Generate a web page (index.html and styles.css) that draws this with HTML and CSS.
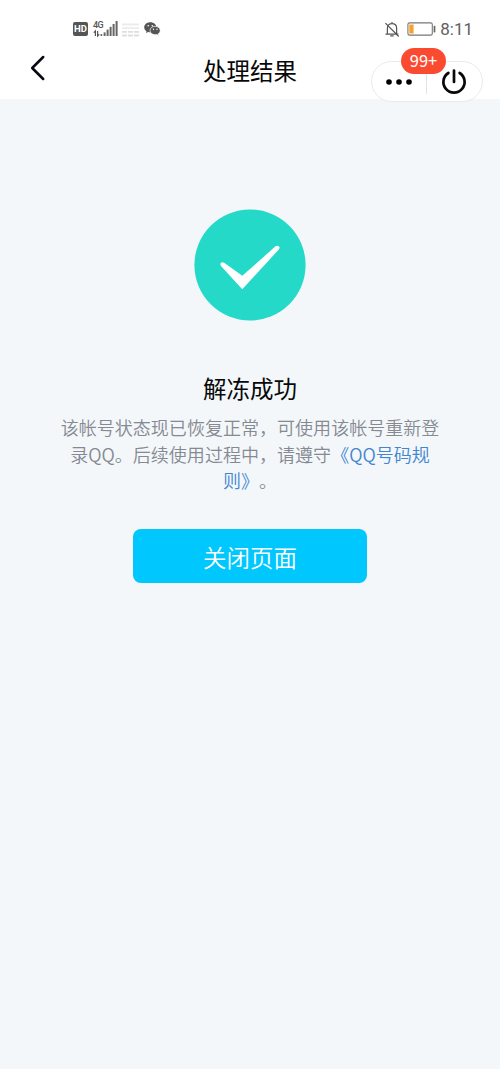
FILE: index.html
```html
<!DOCTYPE html>
<html lang="zh-CN">
<head>
<meta charset="utf-8">
<title>处理结果</title>
<link rel="stylesheet" href="styles.css">
</head>
<body>
<header class="top">
  <div class="status">
    <div class="status-left">
      <span class="hd">HD</span>
      <div class="network">
        <span class="gen">4G</span>
        <svg class="signal" width="26" height="18" viewBox="0 0 26 18">
          <g fill="#666">
            <rect x="10.6" y="12.4" width="2" height="3.6"/><rect x="13.6" y="9.6" width="2" height="6.4"/>
            <rect x="16.6" y="6.8" width="2" height="9.2"/><rect x="19.6" y="4" width="2" height="12"/><rect x="22.6" y="1" width="2" height="15"/>
            <rect x="7.6" y="14" width="1.6" height="2"/>
          </g>
          <path d="M.8 12.6 2.4 11v5M4.6 11v5l1.7-1.6" fill="none" stroke="#555" stroke-width="1.2"/>
        </svg>
      </div>
      <svg class="faint" width="17" height="14" viewBox="0 0 17 14">
        <path d="M0 1.5h17M0 5.2h17" stroke="#ececec" stroke-width="1.8"/>
        <path d="M0 8.9h17M0 12.5h17" stroke="#dedede" stroke-width="1.8" stroke-dasharray="5 1"/>
      </svg>
      <svg class="wechat" width="17" height="14" viewBox="0 0 17 14">
        <path d="M6.3.3C2.9.3.2 2.5.2 5.3c0 1.6.9 3 2.3 3.900L2 11l2.200-1.100c.7.2 1.400.3 2.100.3 3.400 0 6.100-2.200 6.100-4.900S9.700.3 6.300.3z" fill="#555"/>
        <path d="M11.100 4.300c-2.900 0-5.100 1.900-5.100 4.200s2.200 4.200 5.100 4.200c.6 0 1.200-.1 1.700-.2l1.800.9-.4-1.500c1.200-.8 2-2 2-3.400 0-2.300-2.300-4.200-5.100-4.200z" fill="#555" stroke="#fff" stroke-width=".7"/>
        <g fill="#fff"><circle cx="4.200" cy="3.800" r=".8"/><circle cx="8.300" cy="3.800" r=".8"/><circle cx="9.500" cy="7.300" r=".7"/><circle cx="13" cy="7.300" r=".7"/></g>
      </svg>
    </div>
    <div class="status-right">
      <svg class="bell" width="16" height="17" viewBox="0 0 16 17" fill="none" stroke="#555" stroke-width="1.2">
        <path d="M3.400 13V7.200c0-2.500 1.800-4.500 4.600-4.500s4.600 2 4.600 4.500V13M1.500 13.100h12.800M8 .9v1.800M6.200 14.900h3.500"/>
        <path d="M1.400 2.200l13.300 13.300"/>
      </svg>
      <svg class="battery" width="29" height="14" viewBox="0 0 29 14">
        <rect x=".9" y=".9" width="24.400" height="12.200" rx="1.700" fill="#fff" stroke="#777" stroke-width="1.100"/>
        <rect x="2.300" y="2.500" width="4.300" height="9" fill="#f7a22c"/>
        <path d="M27.500 3.800v6.600" stroke="#666" stroke-width="1.700"/>
      </svg>
      <span class="clock">8:11</span>
    </div>
  </div>
  <div class="nav">
    <svg class="back" width="16" height="28" viewBox="0 0 16 28">
      <path d="M13.200 3 2.200 14 13.200 25" fill="none" stroke="#080810" stroke-width="2.500" stroke-linecap="round" stroke-linejoin="round"/>
    </svg>
    <h1 class="title">处理结果</h1>
    <div class="capsule">
      <svg class="more" width="26" height="6" viewBox="0 0 26 6"><circle cx="3" cy="3" r="2.800"/><circle cx="13" cy="3" r="2.800"/><circle cx="23" cy="3" r="2.800"/></svg>
      <span class="divider"></span>
      <svg class="power" width="26" height="26" viewBox="0 0 26 26" fill="none" stroke="#080808" stroke-width="2.700" stroke-linecap="round">
        <path d="M13 1.500v11.500M7.400 4a10.600 10.600 0 1 0 11.200 0"/>
      </svg>
      <span class="badge">99+</span>
    </div>
  </div>
</header>
<main class="result">
  <svg class="success" width="112" height="112" viewBox="0 0 112 112">
    <circle cx="56" cy="56" r="55.600" fill="#25d9c9"/>
    <path d="M30.200 53.700 48.300 66.800 81.500 37.300C84 35.400 87 38 84.800 40.500L48.300 80.300 27.200 57.200C25 54.700 27.600 52 30.200 53.700z" fill="#fff"/>
  </svg>
  <h2 class="heading">解冻成功</h2>
  <p class="message">该帐号状态现已恢复正常，可使用该帐号重新登<br>录QQ。后续使用过程中，请遵守<a class="rules">《QQ号码规<br>则》</a>。</p>
  <button class="close" type="button">关闭页面</button>
</main>
</body>
</html>
```
FILE: styles.css
```css
* { box-sizing: border-box; }
body {
  margin: 0;
  min-height: 1069px;
  background: #f3f7fa;
  font-family: "Noto Sans CJK SC", sans-serif;
}
.top { height: 99px; background: #fff; }
.status {
  display: flex;
  justify-content: space-between;
  height: 44px;
  padding: 20px 28px 0 73px;
}
.status-left, .status-right { display: flex; align-items: flex-start; }
.hd {
  width: 15px;
  height: 14px;
  margin-top: 2px;
  border-radius: 2px;
  background: #555;
  color: #fff;
  font: bold 9.5px/14px Roboto, sans-serif;
  text-align: center;
}
.network { position: relative; margin-left: 5px; }
.signal { display: block; }
.gen {
  position: absolute;
  left: 0;
  top: 0;
  color: #555;
  font: 500 9px/10px Roboto, sans-serif;
  letter-spacing: -0.5px;
}
.faint { margin: 3px 0 0 3px; }
.wechat { margin: 2px 0 0 5px; }
.bell { margin-top: 1px; }
.battery { margin: 2px 0 0 7px; }
.clock {
  margin-left: 4px;
  margin-right: -1px;
  color: #606060;
  font: 17px/19px Roboto, sans-serif;
}
.nav {
  display: grid;
  grid-template-columns: 120px 1fr 120px;
  height: 55px;
}
.back { margin: 10px 0 0 30px; }
.title {
  margin: 9px 0 0;
  color: #080808;
  font-size: 23.5px;
  font-weight: 400;
  line-height: 34px;
  text-align: center;
}
.capsule {
  position: relative;
  display: flex;
  align-items: center;
  width: 112px;
  height: 41px;
  margin: 17px 0 0 -9px;
  padding-left: 14px;
  border: 1px solid #e9eaee;
  border-radius: 21px;
  background: #fff;
}
.divider { width: 1px; height: 25px; margin: 0 14px; background: #e3e4e6; }
.badge {
  position: absolute;
  left: 29px;
  top: -14px;
  width: 45px;
  height: 26px;
  border-radius: 13px;
  background: #fa4b31;
  color: #fff;
  font: 16.5px/24px "Noto Sans CJK SC", sans-serif;
  text-align: center;
}
.result {
  display: flex;
  flex-direction: column;
  align-items: center;
  padding-top: 110px;
}
.heading {
  margin: 50px 0 0;
  color: #080808;
  font-size: 23.5px;
  font-weight: 400;
  line-height: 34px;
}
.message {
  margin: 9px 0 0;
  color: #858992;
  font-size: 18.05px;
  font-weight: 350;
  line-height: 26.5px;
  text-align: center;
  white-space: nowrap;
  text-spacing-trim: space-all;
}
.rules { color: #4285d0; }
.close {
  width: 234px;
  height: 54px;
  margin-top: 35px;
  padding: 3px 0 0;
  border: 0;
  border-radius: 8px;
  background: #00c8ff;
  color: #fff;
  font: 350 23.5px/51px "Noto Sans CJK SC", sans-serif;
}
```
